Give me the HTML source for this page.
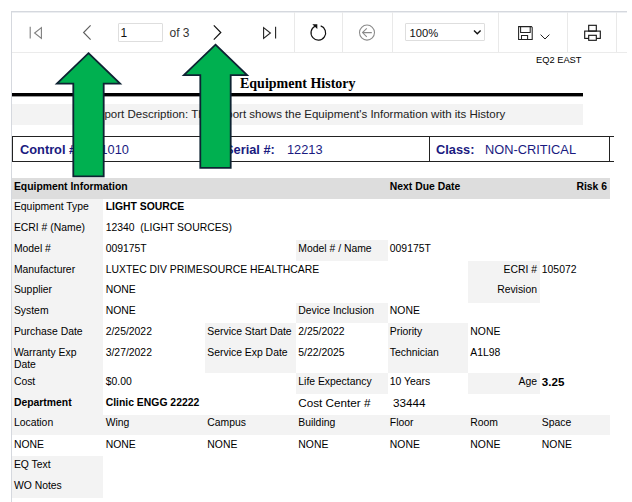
<!DOCTYPE html>
<html><head><meta charset="utf-8">
<style>
*{margin:0;padding:0;box-sizing:border-box}
html,body{width:632px;height:502px;overflow:hidden;background:#fff}
body{position:relative;font-family:"Liberation Sans",sans-serif;color:#000}
.a{position:absolute}
.sep{position:absolute;top:12px;width:1px;height:40px;background:#e9e9e9}
.t{position:absolute;white-space:nowrap;font-size:10.5px;line-height:12px}
.g{position:absolute;background:#f3f3f3}
.b{font-weight:bold}
</style></head><body>
<!-- toolbar -->
<div class="a" style="left:11px;top:11px;width:616px;height:1px;background:#d5d8de"></div>
<div class="a" style="left:11px;top:12px;width:616px;height:1px;background:#eceef1"></div>
<div class="a" style="left:11px;top:11px;width:1px;height:491px;background:#d5d8de"></div>
<div class="a" style="left:12px;top:52px;width:615px;height:1px;background:#ebebeb"></div>
<div class="sep" style="left:294px"></div>
<div class="sep" style="left:342px"></div>
<div class="sep" style="left:392px"></div>
<div class="sep" style="left:498px"></div>
<div class="sep" style="left:567px"></div>
<div class="sep" style="left:616px"></div>

<svg class="a" style="left:0;top:0" width="632" height="60" viewBox="0 0 632 60">
  <!-- first page -->
  <g fill="none" stroke="#7d7d7d" stroke-width="1.1">
    <line x1="30.2" y1="26.8" x2="30.2" y2="38.6"/>
    <path d="M41.4 27.6 L34.6 33 L41.4 38.4 Z" stroke-linejoin="miter"/>
  </g>
  <!-- prev -->
  <path d="M90.6 25.3 L83.6 32.5 L90.6 39.7" fill="none" stroke="#5e5e5e" stroke-width="1.15"/>
  <!-- next -->
  <path d="M213.8 25.3 L220.8 32.5 L213.8 39.7" fill="none" stroke="#111" stroke-width="1.2"/>
  <!-- last -->
  <g fill="none" stroke="#222" stroke-width="1.1">
    <path d="M263.6 27.6 L270.4 33 L263.6 38.4 Z"/>
    <line x1="275.6" y1="26.8" x2="275.6" y2="38.6"/>
  </g>
  <!-- refresh -->
  <g fill="none" stroke="#111" stroke-width="1.2">
    <path d="M320.7 25.9 A7.3 7.3 0 1 1 315.0 26.3"/>
  </g>
  <path d="M312.3 24.3 L317.3 24.3 L317.3 29 Z" fill="#111"/>
  <!-- back circle -->
  <g fill="none" stroke="#8a8a8a" stroke-width="1.05">
    <circle cx="367" cy="32.6" r="7.5"/>
    <path d="M366.8 28.3 L362.5 32.6 L366.8 36.9 M362.8 32.6 L371.8 32.6"/>
  </g>
  <!-- select chevron -->
  <path d="M474 30.5 L477.3 33.8 L480.6 30.5" fill="none" stroke="#111" stroke-width="1.4"/>
  <!-- save -->
  <g fill="none" stroke="#222" stroke-width="1.05">
    <path d="M518.6 26.6 H531.4 L532.2 27.4 V39.4 H518.6 Z"/>
    <path d="M520.6 26.6 V32.4 H530.2 V26.6"/>
    <path d="M521.5 39.4 V35.4 H527.6 V39.4"/>
  </g>
  <path d="M540.6 34.6 L545 39 L549.4 34.6" fill="none" stroke="#222" stroke-width="1"/>
  <!-- print -->
  <g fill="none" stroke="#111" stroke-width="1.1">
    <rect x="588.7" y="25.3" width="7.6" height="5.8"/>
    <rect x="584.7" y="31.1" width="15.6" height="7.3"/>
    <rect x="588.7" y="35.3" width="7.6" height="5" fill="#fff"/>
  </g>
</svg>
<div class="a" style="left:118px;top:23px;width:45px;height:19px;border:1px solid #dedede;border-radius:1px"></div>
<div class="t" style="left:120.5px;top:26px;font-size:12px;line-height:14px;color:#111">1</div>
<div class="t" style="left:169.5px;top:26px;font-size:12px;line-height:14px;color:#333">of 3</div>
<div class="a" style="left:405px;top:23px;width:80px;height:18px;border:1px solid #dedede;border-radius:1px"></div>
<div class="t" style="left:409.5px;top:26px;font-size:11.2px;line-height:14px;color:#111">100%</div>

<!-- report header -->
<div class="t" style="left:536px;top:55px;font-size:9.3px;line-height:11px">EQ2 EAST</div>
<div class="t" style="left:240px;top:76px;font-family:'Liberation Serif',serif;font-weight:bold;font-size:14px;line-height:16px">Equipment History</div>
<div class="a" style="left:12px;top:93px;width:571px;height:3px;background:#000"></div>
<div class="a" style="left:12px;top:96px;width:571px;height:1px;background:#9a9a9a"></div>
<div class="a" style="left:12px;top:104px;width:571px;height:21px;background:#f3f3f3"></div>
<div class="t" style="left:12px;top:108px;width:571px;text-align:center;font-size:11.5px;line-height:13px;color:#222">Report Description: This report shows the Equipment's Information with its History</div>

<!-- control box -->
<div class="a" style="left:12px;top:136px;width:602px;height:1px;background:#222"></div>
<div class="a" style="left:12px;top:161px;width:602px;height:1px;background:#222"></div>
<div class="a" style="left:12px;top:136px;width:1px;height:25px;background:#222"></div>
<div class="a" style="left:429px;top:136px;width:1px;height:25px;background:#222"></div>
<div class="a" style="left:609px;top:136px;width:1px;height:25px;background:#222"></div>
<div class="t b" style="left:20px;top:142px;font-size:12.8px;line-height:15px;color:#1a1a80">Control #:</div>
<div class="t" style="left:100.5px;top:142px;font-size:12.8px;line-height:15px;color:#1a1a80">1010</div>
<div class="t b" style="left:225px;top:142px;font-size:12.8px;line-height:15px;color:#1a1a80">Serial #:</div>
<div class="t" style="left:287px;top:142px;font-size:12.8px;line-height:15px;color:#1a1a80">12213</div>
<div class="t b" style="left:436px;top:142px;font-size:12.8px;line-height:15px;color:#1a1a80">Class:</div>
<div class="t" style="left:485px;top:142px;font-size:12.8px;line-height:15px;color:#1a1a80">NON-CRITICAL</div>

<!-- table -->
<div id="tbl"><div class="a" style="left:12px;top:178.00px;width:597.5px;height:20.75px;background:#dddddd"></div>
<div class="a" style="left:12px;top:198.75px;width:90.5px;height:215.75px;background:#f3f3f3"></div>
<div class="a" style="left:296px;top:240.25px;width:91.5px;height:20.75px;background:#f3f3f3"></div>
<div class="a" style="left:468px;top:261.00px;width:71.5px;height:41.50px;background:#f3f3f3"></div>
<div class="a" style="left:296px;top:302.50px;width:91.5px;height:20.75px;background:#f3f3f3"></div>
<div class="a" style="left:205px;top:323.25px;width:91px;height:49.45px;background:#f3f3f3"></div>
<div class="a" style="left:387.5px;top:323.25px;width:80.5px;height:49.45px;background:#f3f3f3"></div>
<div class="a" style="left:296px;top:372.70px;width:91.5px;height:20.90px;background:#f3f3f3"></div>
<div class="a" style="left:468px;top:372.70px;width:71.5px;height:20.90px;background:#f3f3f3"></div>
<div class="a" style="left:12px;top:414.50px;width:597.5px;height:20.50px;background:#f3f3f3"></div>
<div class="a" style="left:12px;top:456.20px;width:90.5px;height:41.70px;background:#f3f3f3"></div>
<div class="t b" style="left:13.90px;top:181.61px;font-size:10.4px;line-height:10.4px">Equipment Information</div>
<div class="t b" style="left:389.80px;top:181.61px;font-size:10.4px;line-height:10.4px">Next Due Date</div>
<div class="t b" style="right:25.0px;top:181.61px;font-size:10.4px;line-height:10.4px">Risk 6</div>
<div class="t" style="left:13.90px;top:202.36px;font-size:10.4px;line-height:10.4px">Equipment Type</div>
<div class="t b" style="left:105.70px;top:202.36px;font-size:10.4px;line-height:10.4px">LIGHT SOURCE</div>
<div class="t" style="left:13.90px;top:223.11px;font-size:10.4px;line-height:10.4px">ECRI # (Name)</div>
<div class="t" style="left:105.70px;top:223.11px;font-size:10.4px;line-height:10.4px">12340&nbsp;&nbsp;(LIGHT SOURCES)</div>
<div class="t" style="left:13.90px;top:243.86px;font-size:10.4px;line-height:10.4px">Model #</div>
<div class="t" style="left:105.70px;top:243.86px;font-size:10.4px;line-height:10.4px">009175T</div>
<div class="t" style="left:298.30px;top:243.86px;font-size:10.4px;line-height:10.4px">Model # / Name</div>
<div class="t" style="left:389.80px;top:243.86px;font-size:10.4px;line-height:10.4px">009175T</div>
<div class="t" style="left:13.90px;top:264.61px;font-size:10.4px;line-height:10.4px">Manufacturer</div>
<div class="t" style="left:105.70px;top:264.61px;font-size:10.4px;line-height:10.4px">LUXTEC DIV PRIMESOURCE HEALTHCARE</div>
<div class="t" style="right:95.0px;top:264.61px;font-size:10.4px;line-height:10.4px">ECRI #</div>
<div class="t" style="left:541.80px;top:264.61px;font-size:10.4px;line-height:10.4px">105072</div>
<div class="t" style="left:13.90px;top:285.36px;font-size:10.4px;line-height:10.4px">Supplier</div>
<div class="t" style="left:105.70px;top:285.36px;font-size:10.4px;line-height:10.4px">NONE</div>
<div class="t" style="right:95.0px;top:285.36px;font-size:10.4px;line-height:10.4px">Revision</div>
<div class="t" style="left:13.90px;top:306.11px;font-size:10.4px;line-height:10.4px">System</div>
<div class="t" style="left:105.70px;top:306.11px;font-size:10.4px;line-height:10.4px">NONE</div>
<div class="t" style="left:298.30px;top:306.11px;font-size:10.4px;line-height:10.4px">Device Inclusion</div>
<div class="t" style="left:389.80px;top:306.11px;font-size:10.4px;line-height:10.4px">NONE</div>
<div class="t" style="left:13.90px;top:326.86px;font-size:10.4px;line-height:10.4px">Purchase Date</div>
<div class="t" style="left:105.70px;top:326.86px;font-size:10.4px;line-height:10.4px">2/25/2022</div>
<div class="t" style="left:207.30px;top:326.86px;font-size:10.4px;line-height:10.4px">Service Start Date</div>
<div class="t" style="left:298.30px;top:326.86px;font-size:10.4px;line-height:10.4px">2/25/2022</div>
<div class="t" style="left:389.80px;top:326.86px;font-size:10.4px;line-height:10.4px">Priority</div>
<div class="t" style="left:470.30px;top:326.86px;font-size:10.4px;line-height:10.4px">NONE</div>
<div class="t" style="left:13.90px;top:347.61px;font-size:10.4px;line-height:10.4px">Warranty Exp</div>
<div class="t" style="left:13.90px;top:359.61px;font-size:10.4px;line-height:10.4px">Date</div>
<div class="t" style="left:105.70px;top:347.61px;font-size:10.4px;line-height:10.4px">3/27/2022</div>
<div class="t" style="left:207.30px;top:347.61px;font-size:10.4px;line-height:10.4px">Service Exp Date</div>
<div class="t" style="left:298.30px;top:347.61px;font-size:10.4px;line-height:10.4px">5/22/2025</div>
<div class="t" style="left:389.80px;top:347.61px;font-size:10.4px;line-height:10.4px">Technician</div>
<div class="t" style="left:470.30px;top:347.61px;font-size:10.4px;line-height:10.4px">A1L98</div>
<div class="t" style="left:13.90px;top:376.61px;font-size:10.4px;line-height:10.4px">Cost</div>
<div class="t" style="left:105.70px;top:376.61px;font-size:10.4px;line-height:10.4px">$0.00</div>
<div class="t" style="left:298.30px;top:376.61px;font-size:10.4px;line-height:10.4px">Life Expectancy</div>
<div class="t" style="left:389.80px;top:376.61px;font-size:10.4px;line-height:10.4px">10 Years</div>
<div class="t" style="right:95.0px;top:376.61px;font-size:10.4px;line-height:10.4px">Age</div>
<div class="t b" style="left:541.80px;top:375.89px;font-size:11.6px;line-height:11.6px">3.25</div>
<div class="t b" style="left:13.90px;top:398.11px;font-size:10.4px;line-height:10.4px">Department</div>
<div class="t b" style="left:105.70px;top:398.11px;font-size:10.4px;line-height:10.4px">Clinic ENGG 22222</div>
<div class="t" style="left:298.30px;top:397.41px;font-size:11.7px;line-height:11.7px">Cost Center #</div>
<div class="t" style="left:393.00px;top:397.41px;font-size:11.7px;line-height:11.7px">33444</div>
<div class="t" style="left:13.90px;top:418.11px;font-size:10.4px;line-height:10.4px">Location</div>
<div class="t" style="left:105.70px;top:418.11px;font-size:10.4px;line-height:10.4px">Wing</div>
<div class="t" style="left:207.30px;top:418.11px;font-size:10.4px;line-height:10.4px">Campus</div>
<div class="t" style="left:298.30px;top:418.11px;font-size:10.4px;line-height:10.4px">Building</div>
<div class="t" style="left:389.80px;top:418.11px;font-size:10.4px;line-height:10.4px">Floor</div>
<div class="t" style="left:470.30px;top:418.11px;font-size:10.4px;line-height:10.4px">Room</div>
<div class="t" style="left:541.80px;top:418.11px;font-size:10.4px;line-height:10.4px">Space</div>
<div class="t" style="left:13.90px;top:439.51px;font-size:10.4px;line-height:10.4px">NONE</div>
<div class="t" style="left:105.70px;top:439.51px;font-size:10.4px;line-height:10.4px">NONE</div>
<div class="t" style="left:207.30px;top:439.51px;font-size:10.4px;line-height:10.4px">NONE</div>
<div class="t" style="left:298.30px;top:439.51px;font-size:10.4px;line-height:10.4px">NONE</div>
<div class="t" style="left:389.80px;top:439.51px;font-size:10.4px;line-height:10.4px">NONE</div>
<div class="t" style="left:470.30px;top:439.51px;font-size:10.4px;line-height:10.4px">NONE</div>
<div class="t" style="left:541.80px;top:439.51px;font-size:10.4px;line-height:10.4px">NONE</div>
<div class="t" style="left:13.90px;top:459.81px;font-size:10.4px;line-height:10.4px">EQ Text</div>
<div class="t" style="left:13.90px;top:480.61px;font-size:10.4px;line-height:10.4px">WO Notes</div></div><!--/tbl-->
<svg class="a" style="left:0;top:0" width="632" height="502" viewBox="0 0 632 502">
<path d="M88.5 53.2 L120.1 83.7 L103.7 83.7 L103.7 176.3 L73.3 176.3 L73.3 83.7 L56.9 83.7 Z" fill="#00b050" stroke="#0e2333" stroke-width="1.8" stroke-linejoin="miter"/>
<path d="M215.5 44.7 L247.1 75.2 L230.7 75.2 L230.7 167.8 L200.3 167.8 L200.3 75.2 L183.9 75.2 Z" fill="#00b050" stroke="#0e2333" stroke-width="1.8" stroke-linejoin="miter"/>
</svg><!--arrows-->
</body></html>
